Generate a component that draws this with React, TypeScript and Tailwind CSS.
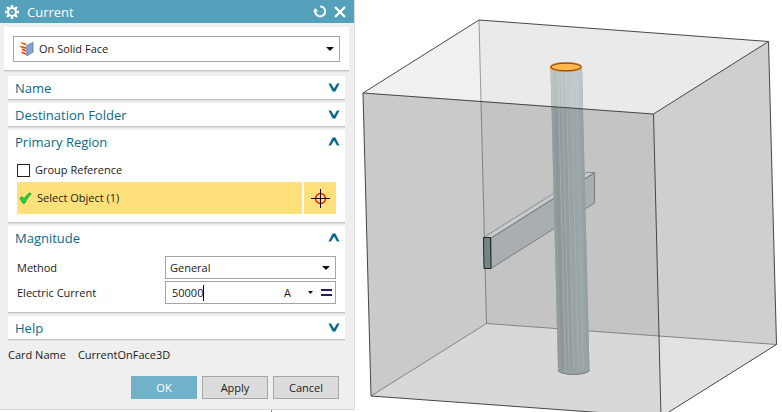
import { useState } from "react";
import type { ReactNode } from "react";

interface ChevronProps {
  open: boolean;
}

interface SectionProps {
  title: string;
  defaultOpen?: boolean;
  children?: ReactNode;
}

const Chevron = ({ open }: ChevronProps) => (
  <svg viewBox="0 0 12 9" className="h-[9px] w-3" fill="#0a6a8c">
    {open ? (
      <path d="M0.5 8.5L4.6 0.5H7.4L11.5 8.5H9L6 3.4L3 8.5Z" />
    ) : (
      <path d="M0.5 0.5L4.6 8.5H7.4L11.5 0.5H9L6 5.6L3 0.5Z" />
    )}
  </svg>
);

const DropArrow = () => (
  <svg viewBox="0 0 8 4" className="pointer-events-none h-1 w-2 shrink-0" fill="#111">
    <path d="M0 0H8L4 4Z" />
  </svg>
);

const FaceIcon = () => (
  <svg viewBox="0 0 16 16" className="h-4 w-4 shrink-0">
    <path d="M7.8 4.6L14 1.4V11.2L7.8 14.8Z" fill="#86a5d6" stroke="#5873a8" strokeWidth="0.8" />
    <path d="M1.5 1.6L4 2.4M0 5.2L3 6M2 11L4 11.8" stroke="#f8a070" strokeWidth="1.2" />
    <path d="M3 2L7.2 3.6M2 5.6L7.2 7.2M3 8.2L7.2 10M3 11.4L7.2 13.2" stroke="#f25a14" strokeWidth="1.8" />
  </svg>
);

const CheckIcon = () => (
  <svg viewBox="0 0 13 12" className="h-3 w-[13px] shrink-0">
    <path
      d="M0.8 6.4L3 4.6L5 6.8C6.6 4.2 8.8 2.1 11 0.8L12.2 2C9.4 4.6 7.6 7.4 6 11L4 11.2Z"
      fill="#22d63a"
      stroke="#129a25"
      strokeWidth="0.8"
    />
  </svg>
);

const TargetIcon = () => (
  <svg viewBox="0 0 19 19" className="h-[19px] w-[19px]" fill="none">
    <circle cx="9.5" cy="9.5" r="5" stroke="#ee1111" strokeWidth="1.3" />
    <path d="M9.5 0V19M0 9.5H19" stroke="#000" />
  </svg>
);

const GearIcon = () => (
  <svg viewBox="0 0 14 14" className="h-[14px] w-[14px]" fill="none" stroke="#fff">
    <circle cx="7" cy="7" r="4" strokeWidth="2.2" />
    <path
      d="M7 0V2.4M7 11.6V14M0 7H2.4M11.6 7H14M2 2L3.8 3.8M10.2 10.2L12 12M12 2L10.2 3.8M3.8 10.2L2 12"
      strokeWidth="2.4"
    />
    <circle cx="7" cy="7" r="0.6" strokeWidth="0.5" />
  </svg>
);

const ResetIcon = () => (
  <svg viewBox="0 0 13 13" className="h-[13px] w-[13px]" fill="none">
    <path d="M7.2 1.4A5 5 0 1 1 2.2 6" stroke="#fff" strokeWidth="2" />
    <path d="M0 6.4L2.4 3L5.2 6.4Z" fill="#fff" />
  </svg>
);

const CloseIcon = () => (
  <svg viewBox="0 0 12 12" className="h-3 w-3" fill="none">
    <path d="M1 1L11 11M11 1L1 11" stroke="#fff" strokeWidth="2.2" />
  </svg>
);

const Section = ({ title, defaultOpen = false, children }: SectionProps) => {
  const [open, setOpen] = useState(defaultOpen);

  return (
    <section className="border-b border-[#c4c4c4] bg-white shadow-[0_1px_0_#e0e0e0]">
      <button
        type="button"
        aria-expanded={open}
        onClick={() => setOpen(!open)}
        className="flex h-[23px] w-full items-center justify-between pr-[5px] pl-[7px] text-[13px] leading-5 text-[#0a6a8c]"
      >
        {title}
        <Chevron open={open} />
      </button>
      {open && children}
    </section>
  );
};

const stripes = [
  { top: 549, bottom: 557, width: 4, color: "#929c9d" },
  { top: 553, bottom: 561, width: 4, color: "#8d9799" },
  { top: 558, bottom: 566, width: 3, color: "#959b9c" },
  { top: 562, bottom: 570, width: 3, color: "#959c9d" },
  { top: 566, bottom: 574, width: 4, color: "#99a2a4" },
  { top: 571, bottom: 579, width: 4, color: "#9ba5a7" },
  { top: 576, bottom: 584, width: 3, color: "#9aa5a9" },
  { top: 579, bottom: 587, width: 4, color: "#93a0a4" },
];

const Viewport = () => (
  <svg viewBox="355 0 427 412" className="block w-full" role="img" aria-label="Model view">
    <defs>
      <clipPath id="rod">
        <path d="M550.5 67A15.7 4.5 0 0 1 582 67L589.5 370A15.7 4.5 0 0 1 558 370Z" />
      </clipPath>
    </defs>

    {/* box faces */}
    <path d="M363 93L479 20L481 101Z" fill="#f0f0f0" />
    <path d="M479 20L768.5 41.5L653.5 114L481 101Z" fill="#eaeaea" />
    <path d="M363 93L481 101L486.5 323.5L371 396Z" fill="#cacaca" />
    <path d="M481 101L653.5 114L659 336L486.5 323.5Z" fill="#c4c4c4" />
    <path d="M653.5 114L768.5 41.5L776.5 344.5L659 336Z" fill="#cfcfcf" />
    <path d="M371 396L486.5 323.5L659 336L661 417Z" fill="#d8d8d8" />
    <path d="M659 336L776.5 344.5L661 417Z" fill="#e2e2e2" />
    <path d="M481 101L486.5 323.5L776.5 344.5M486.5 323.5L371 396" fill="none" stroke="#777" strokeWidth="0.9" />
    <path d="M479 20L481 101" stroke="#999" />

    {/* bar */}
    <path d="M483.5 237.5L587 172.5H594.5L491 238Z" fill="#c6cccd" stroke="#777b7c" strokeWidth="0.8" />
    <path d="M491 238L594.5 173V203L491 268.5Z" fill="#a9aeb1" stroke="#6c7071" strokeWidth="0.8" />
    <path d="M483.5 237.5H490.5L491 268.5H484Z" fill="#758586" stroke="#222" />

    {/* rod */}
    <g clipPath="url(#rod)">
      <path d="M545 60H595V380H545Z" fill="#a6adaf" />
      {stripes.map((s) => (
        <path
          key={s.top}
          d={`M${s.top} 60H${s.top + s.width}L${s.bottom + s.width} 376H${s.bottom}Z`}
          fill={s.color}
        />
      ))}
      <path d="M545 60H590V109.5L545 106Z" fill="#f4f8f9" fillOpacity="0.42" />
    </g>
    <path d="M558 370A15.7 4.5 0 0 0 589.5 370" fill="#98a2a4" stroke="#6c7374" strokeWidth="0.8" />
    <ellipse cx="566" cy="67" rx="15.5" ry="4.3" fill="#ffb84d" stroke="#f5893a" strokeWidth="1.6" />
    <ellipse cx="566" cy="67" rx="15" ry="3.8" fill="none" stroke="#40280c" strokeWidth="0.7" />

    {/* box outline */}
    <path
      d="M363 93L479 20L768.5 41.5L776.5 344.5L661 417L371 396ZL653.5 114L661 417M653.5 114L768.5 41.5"
      fill="none"
      stroke="#333"
      strokeWidth="0.9"
    />
  </svg>
);

const App = () => {
  const [current, setCurrent] = useState("50000");

  return (
    <main className="grid grid-cols-[355fr_427fr] items-start bg-white font-['Open_Sans','Noto_Sans',sans-serif] text-[11px] leading-4 text-[#1a1a1a]">
      <div>
        <form className="border-r border-b border-[#d8d8d8] bg-[#efefef]" onSubmit={(e) => e.preventDefault()}>
          <header className="flex h-[23px] items-center bg-[#55a0ba] pr-2 pl-[5px] text-white">
            <GearIcon />
            <h1 className="grow pl-2 text-[13px] leading-5">Current</h1>
            <div className="flex items-center gap-2">
              <button type="button" aria-label="Reset">
                <ResetIcon />
              </button>
              <button type="button" aria-label="Close">
                <CloseIcon />
              </button>
            </div>
          </header>

          <div className="mt-1 mr-[5px] ml-1 border-b border-[#c4c4c4] bg-white px-[9px] pt-[9px] pb-2 shadow-[0_1px_0_#e0e0e0]">
            <div className="flex h-[26px] items-center border border-[#a6a6a6] px-[5px]">
              <FaceIcon />
              <select aria-label="Type" className="grow appearance-none pl-1 outline-none">
                <option>On Solid Face</option>
              </select>
              <DropArrow />
            </div>
          </div>

          <div className="mt-[5px] mr-[9px] ml-2 flex flex-col gap-[3px]">
            <Section title="Name" />
            <Section title="Destination Folder" />
            <Section title="Primary Region" defaultOpen>
              <div className="px-[9px] pt-[9px] pb-2">
                <label className="flex h-4 items-center gap-[5px]">
                  <input type="checkbox" className="h-[13px] w-[13px] appearance-none border border-[#222] bg-white" />
                  Group Reference
                </label>
                <div className="mt-1 flex gap-[2px]">
                  <button type="button" className="flex h-8 grow items-center gap-[5px] bg-[#ffe07a] pl-[2px]">
                    <CheckIcon />
                    Select Object (1)
                  </button>
                  <button
                    type="button"
                    aria-label="Pick object"
                    className="flex h-8 w-8 items-center justify-center bg-[#ffe07a]"
                  >
                    <TargetIcon />
                  </button>
                </div>
              </div>
            </Section>
            <Section title="Magnitude" defaultOpen>
              <div className="grid grid-cols-[148fr_171fr] items-center gap-y-[2px] px-[9px] pt-[7px] pb-2">
                <label htmlFor="method">Method</label>
                <div className="flex h-[23px] items-center border border-[#a6a6a6] pr-[5px] pl-1">
                  <select id="method" className="grow appearance-none outline-none">
                    <option>General</option>
                  </select>
                  <DropArrow />
                </div>
                <label htmlFor="electric-current">Electric Current</label>
                <div className="flex h-[23px] items-center border border-[#a6a6a6] pr-[3px] pl-[6px]">
                  <input
                    id="electric-current"
                    value={current}
                    onChange={(e) => setCurrent(e.target.value)}
                    className="border-r border-black [field-sizing:content] outline-none"
                  />
                  <select aria-label="Unit" className="ml-auto w-6 appearance-none outline-none">
                    <option>A</option>
                  </select>
                  <svg viewBox="0 0 5 3" className="pointer-events-none h-[3px] w-[5px]" fill="#111">
                    <path d="M0 0H5L2.5 3Z" />
                  </svg>
                  <button type="button" aria-label="Formula" className="ml-2">
                    <svg viewBox="0 0 11 7" className="h-[7px] w-[11px]" fill="#2a1a6c">
                      <path d="M0 0H11V2H0ZM0 5H11V7H0Z" />
                    </svg>
                  </button>
                </div>
              </div>
            </Section>
            <Section title="Help" />
          </div>

          <dl className="mx-2 mt-[7px] flex gap-3">
            <dt>Card Name</dt>
            <dd>CurrentOnFace3D</dd>
          </dl>

          <div className="mt-[13px] mr-[15px] mb-[10px] flex justify-end gap-[5px]">
            <button type="submit" className="h-[23px] w-[66px] bg-[#72b2c8] text-white">
              OK
            </button>
            <button type="button" className="h-[23px] w-[66px] border border-[#a6a6a6] bg-[#dcdcdc]">
              Apply
            </button>
            <button type="button" className="h-[23px] w-[66px] border border-[#a6a6a6] bg-[#dcdcdc]">
              Cancel
            </button>
          </div>
        </form>
        <div className="ml-[271px] h-[2px] w-px bg-[#888]" />
      </div>
      <Viewport />
    </main>
  );
};

export default App;
